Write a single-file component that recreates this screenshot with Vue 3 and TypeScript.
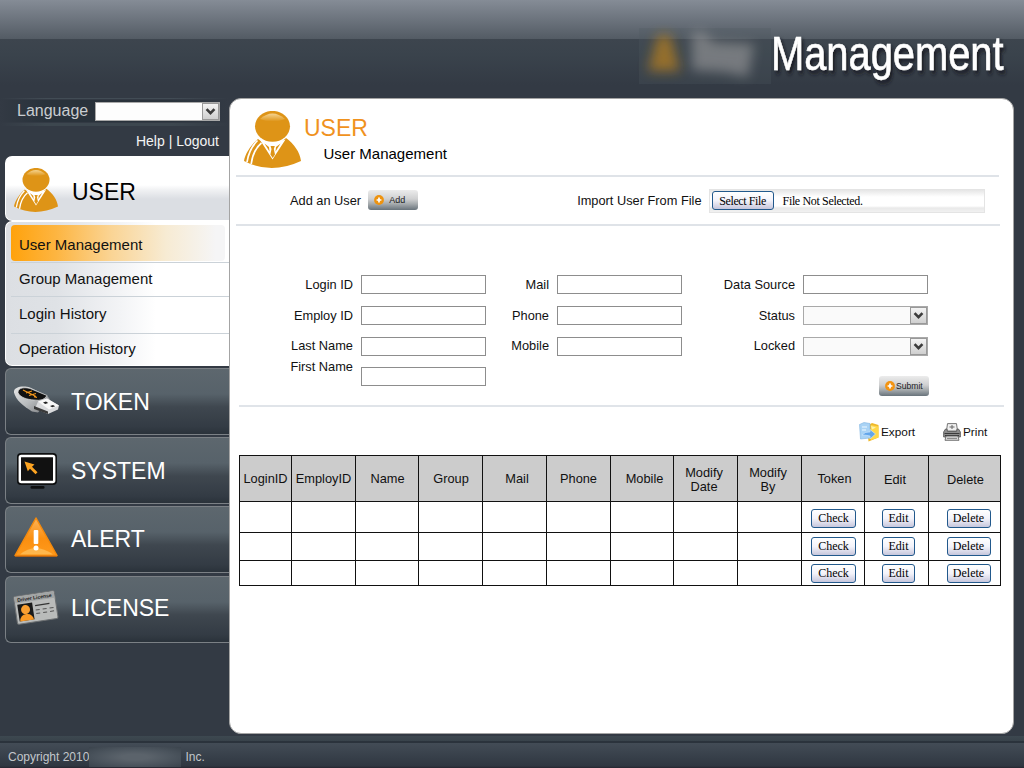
<script setup lang="ts">
interface Field {
  label: string
  kind: 'text' | 'select'
}

const submenu: string[] = ['User Management', 'Group Management', 'Login History', 'Operation History']

const sections = [
  { id: 'token', label: 'TOKEN' },
  { id: 'system', label: 'SYSTEM' },
  { id: 'alert', label: 'ALERT' },
  { id: 'license', label: 'LICENSE' },
]

const fields: Field[] = [
  { label: 'Login ID', kind: 'text' },
  { label: 'Mail', kind: 'text' },
  { label: 'Data Source', kind: 'text' },
  { label: 'Employ ID', kind: 'text' },
  { label: 'Phone', kind: 'text' },
  { label: 'Status', kind: 'select' },
  { label: 'Last Name', kind: 'text' },
  { label: 'Mobile', kind: 'text' },
  { label: 'Locked', kind: 'select' },
]

const columns: string[] = [
  'LoginID', 'EmployID', 'Name', 'Group', 'Mail', 'Phone', 'Mobile',
  'Modify Date', 'Modify By', 'Token', 'Edit', 'Delete',
]
const rows: number[] = [1, 2, 3]
</script>

<template>
  <div class="page">
    <svg class="defs" width="0" height="0">
      <defs>
        <linearGradient id="gloss" x1="0" y1="0" x2="0" y2="1">
          <stop offset="0" stop-color="#f9dfa6" />
          <stop offset="1" stop-color="#de9417" />
        </linearGradient>
        <linearGradient id="alertFill" x1="0" y1="0" x2="0" y2="1">
          <stop offset="0" stop-color="#fdb45a" />
          <stop offset="0.55" stop-color="#fb8f10" />
          <stop offset="1" stop-color="#ff9a1c" />
        </linearGradient>
        <linearGradient id="usbBody" x1="0" y1="0" x2="1" y2="1">
          <stop offset="0" stop-color="#e8e8e8" />
          <stop offset="0.5" stop-color="#b9bcbe" />
          <stop offset="1" stop-color="#77797c" />
        </linearGradient>
        <symbol id="person" viewBox="0 0 57 57">
          <path d="M14 28 C7 34 1 43 0 50 Q27 64 57 50 C56 41 50 33 42 27 Q36 33 28 33 Q20 33 14 28Z" fill="#de9417" />
          <path d="M16 29 L28.500 48.500 L41.500 28.500 Q29 34 16 29Z" fill="#fff" />
          <path d="M26.600 35 L30.800 35 L29.800 38 L31 43.500 L28.700 47 L26.400 43.500 L27.500 38Z" fill="#de9417" />
          <path d="M20.500 32.500 L25 36 L25.500 40.500Z M36.500 32.500 L32 36 L31.500 40.500Z" fill="#de9417" />
          <path d="M13.500 29.500 Q5 38 3 51.200 M17.500 32 Q9 39 7.200 53" stroke="#fff" stroke-width="1.700" fill="none" />
          <ellipse cx="28.500" cy="15.500" rx="18.200" ry="16.500" fill="#fff" />
          <ellipse cx="28.500" cy="15.300" rx="17.500" ry="15.400" fill="#de9417" />
          <path d="M16 8 Q28.500 -3 41 8 Q28.500 13 16 8Z" fill="url(#gloss)" opacity="0.85" />
        </symbol>
      </defs>
    </svg>

    <header class="top">
      <svg width="400" height="98" viewBox="0 0 400 98">
        <defs>
          <filter id="soft" x="-60%" y="-60%" width="220%" height="220%"><feGaussianBlur stdDeviation="6" /></filter>
          <filter id="drop" x="-10%" y="-20%" width="120%" height="150%">
            <feDropShadow dx="2.500" dy="3.500" stdDeviation="2" flood-color="#14191f" flood-opacity="0.9" />
          </filter>
        </defs>
        <rect x="15" y="28" width="132" height="56" fill="#4f5860" opacity="0.28" />
        <path d="M24 71 L34 35 H46 L56 71Z" fill="#b9801f" opacity="0.7" filter="url(#soft)" />
        <path d="M68 32 L80 32 L90 42 L130 44 L124 77 L100 72 L68 70Z" fill="#9b9b9d" opacity="0.6" filter="url(#soft)" />
        <g transform="translate(147 70) scale(0.822 1)">
          <text class="brand" x="0" y="0" filter="url(#drop)">Management</text>
        </g>
      </svg>
    </header>

    <main class="middle">
      <aside class="side">
        <div class="language">
          <span>Language</span>
          <div class="select language-select">
            <i class="arrow"><svg viewBox="0 0 16 16"><path d="M3.800 5.500 L8 9.700 L12.200 5.500" /></svg></i>
          </div>
        </div>
        <nav class="links"><a>Help</a> | <a>Logout</a></nav>

        <div class="section-open">
          <svg class="user-icon"><use href="#person" /></svg>
          <span>USER</span>
        </div>
        <ul class="submenu">
          <li v-for="(item, i) in submenu" :key="item" :class="{ active: i === 0 }">{{ item }}</li>
        </ul>

        <div v-for="s in sections" :key="s.id" class="section" :class="s.id">
          <svg v-if="s.id === 'token'" class="ico" viewBox="0 -2.500 48 40">
            <path d="M1 8 C0 2 11 1 17 3 L34 11 L37 15 L25 28 L19 27 C10 21 3 16 1 8Z" fill="url(#usbBody)" />
            <path d="M5 8 C5 3 12 2.500 17 4 L34 11 Q31 17 21 15.500 C14 15 7 13 5 8Z" fill="#111" stroke="#ddd" stroke-width="0.700" />
            <path d="M10 5.500 L23 12 M13 8.500 L19 6.500 M16 11 L23 9 M21 12 L24 12.800" stroke="#f0951c" stroke-width="1.300" fill="none" />
            <path d="M25 17 L34 14 L46 21 L45 25 L35 29.500 L22 24Z" fill="#d9dadc" />
            <path d="M25 17 L34 14 L46 21 L36 25Z" fill="#f7f7f7" />
            <path d="M30 18 l3 -0.900 l2.200 1.400 l-3 0.900z M37 21.500 l3 -0.900 l2.200 1.200 l-3 0.900z" fill="#222" />
            <path d="M21 21.500 L35 27 V29.500 L21 24.500Z" fill="#3a3a3a" />
          </svg>
          <svg v-else-if="s.id === 'system'" class="ico" viewBox="0 -1 48 40">
            <rect x="4" y="1" width="40" height="32" rx="4" fill="#0e0f10" />
            <rect x="6.800" y="4" width="34.400" height="26" rx="1.500" fill="#111" stroke="#fff" stroke-width="2.400" />
            <path d="M11.500 9.500 L21.500 12.500 L19 14.800 L24.500 20.300 L22.500 22.300 L17 16.800 L14.800 19.300Z" fill="#fca321" />
            <rect x="17.500" y="34" width="14" height="2.800" rx="1.300" fill="#0e0f10" />
          </svg>
          <svg v-else-if="s.id === 'alert'" class="ico" viewBox="0 3.500 48 40">
            <path d="M23 1.500 L44 39 H2Z" fill="url(#alertFill)" stroke="#f58a0c" stroke-width="1.500" stroke-linejoin="round" />
            <path d="M7 38 Q22 25 40 38Z" fill="#ffc462" opacity="0.7" />
            <path d="M2 39.800 H44" stroke="#c7680f" stroke-width="1" />
            <rect x="20.700" y="13.500" width="4.600" height="14" rx="1" fill="#fff" />
            <circle cx="23" cy="31.500" r="2.500" fill="#fff" />
          </svg>
          <svg v-else class="ico" viewBox="0 -0.500 48 40">
            <g transform="rotate(-8.500 23 20)">
              <rect x="2.500" y="5" width="41" height="28" rx="1.500" fill="#b9bbba" stroke="#6d7072" />
              <path d="M3 5.500 H43 V12 H3Z" fill="#a2a5a5" />
              <text x="23" y="10.800" class="card-title" text-anchor="middle">Driver License</text>
              <rect x="5" y="13.500" width="15" height="17" fill="#1a1a1a" />
              <circle cx="12.500" cy="19.500" r="4.500" fill="#fa9f31" />
              <path d="M5.500 30.500 Q6.500 24 12.500 24 Q18.500 24 19.500 30.500Z" fill="#fa9a26" />
              <path d="M22.500 17 H37" stroke="#333" stroke-width="1.200" />
              <path d="M22.500 21.500 H41 M22.500 25 H41" stroke="#555" stroke-dasharray="4 3" />
            </g>
          </svg>
          <span>{{ s.label }}</span>
        </div>
      </aside>

      <section class="panel">
        <div class="title">
          <svg class="title-icon"><use href="#person" /></svg>
          <div>
            <h1>USER</h1>
            <p>User Management</p>
          </div>
        </div>

        <div class="toolbar">
          <span class="add-label">Add an User</span>
          <button class="pill add">
            <svg viewBox="0 0 10 10"><circle cx="5" cy="5" r="4.900" fill="#ee930f" /><path d="M5 2.600 V7.400 M2.600 5 H7.400" stroke="#fff" stroke-width="1.700" /></svg>Add
          </button>
          <span class="import-label">Import User From File</span>
          <div class="file">
            <button class="classic select-file">Select File</button>
            <span>File Not Selected.</span>
          </div>
        </div>

        <form class="filters">
          <template v-for="f in fields" :key="f.label">
            <label>{{ f.label }}</label>
            <input v-if="f.kind === 'text'" type="text" />
            <div v-else class="select">
              <i class="arrow"><svg viewBox="0 0 16 16"><path d="M3.800 5.500 L8 9.700 L12.200 5.500" /></svg></i>
            </div>
          </template>
          <label class="first-name">First Name</label>
          <input type="text" />
          <button type="button" class="pill submit">
            <svg viewBox="0 0 10 10"><circle cx="5" cy="5" r="4.900" fill="#f39412" /><path d="M5 2.600 V7.400 M2.600 5 H7.400" stroke="#fff" stroke-width="1.700" /></svg>Submit
          </button>
        </form>

        <div class="actions">
          <svg class="export-icon" viewBox="0 0 20 20">
            <path d="M8 4 L13 1 L19.500 3 V15.500 L9.500 19.500Z" fill="#f0b92a" />
            <path d="M12 3 L19.500 4.500 V15.500 L12 18Z" fill="#ffd84a" />
            <path d="M0.500 2.500 L5 0.500 L11 1.500 V16 L1.500 17Z" fill="#a9d3f5" stroke="#7fb4e0" stroke-width="0.600" />
            <path d="M3 5 H8 M3 8 H7" stroke="#eef8ff" />
            <path d="M3 13 Q6 9.500 11 10 V7.500 L16.500 12 L11 17 V14 Q7 13 3 13Z" fill="#63a6ea" stroke="#d5ebff" stroke-width="0.600" />
            <path d="M12 4 L17 5.500 L13 7.500Z" fill="#fff3a8" />
          </svg>
          <span class="export">Export</span>
          <svg class="print-icon" viewBox="0 0 18 18">
            <path d="M3.500 8 L4.500 0.600 H13.500 L14.500 8Z" fill="#f0f0f0" stroke="#777" />
            <path d="M6.500 4 H11.500 M9 2 V6" stroke="#666" />
            <path d="M2.500 6 H4 L4.500 8.500 H13.500 L14 6 H15.500 L17.400 9 V14 H0.600 V9Z" fill="#8c8c8c" stroke="#555" stroke-width="0.800" />
            <path d="M1.500 10.500 H16.500 M2 12.500 H16" stroke="#3a3a3a" />
            <path d="M3 13 H15 L16 17.300 H2Z" fill="#dcdcdc" stroke="#555" stroke-width="0.800" />
            <path d="M4 15.300 H14" stroke="#777" />
          </svg>
          <span>Print</span>
        </div>

        <table>
          <colgroup><col v-for="(c, i) in columns" :key="c" :class="'c' + i" /></colgroup>
          <thead>
            <tr><th v-for="c in columns" :key="c" :class="c.toLowerCase()"><span>{{ c }}</span></th></tr>
          </thead>
          <tbody>
            <tr v-for="r in rows" :key="r">
              <td v-for="n in 9" :key="n"></td>
              <td class="check"><button class="classic">Check</button></td>
              <td class="edit-cell"><button class="classic">Edit</button></td>
              <td class="remove"><button class="classic">Delete</button></td>
            </tr>
          </tbody>
        </table>
      </section>
    </main>

    <footer class="bottom">
      <span>Copyright 2010</span>
      <i class="smudge"></i>
      <span>Inc.</span>
    </footer>
  </div>
</template>

<style>
body {
  margin: 0;
  background: #333a44;
}
</style>

<style scoped>
* {
  box-sizing: border-box;
}
.page {
  width: 1024px;
  height: 768px;
  overflow: hidden;
  display: flex;
  flex-direction: column;
  background: #333a44;
  font-family: "Liberation Sans", Arial, sans-serif;
  font-size: 12.8px;
  color: #111;
}
.defs {
  position: absolute;
}
.top {
  height: 98px;
  flex: none;
  display: flex;
  justify-content: flex-end;
  background: linear-gradient(#858c96 0, #535b64 39px, #3d454e 39px, #3a434c 55px, #333a44 85px);
}
.brand {
  font-size: 48.5px;
  fill: #fff;
  stroke: #fff;
  stroke-width: 0.5px;
}
.middle {
  height: 638px;
  flex: none;
  display: flex;
}
.side {
  width: 229px;
  flex: none;
  padding-left: 5px;
  display: flex;
  flex-direction: column;
}
.language {
  height: 29px;
  margin-left: -5px;
  padding: 0 9px 2px 17px;
  display: flex;
  align-items: center;
  justify-content: space-between;
  flex: none;
  font-size: 16px;
  color: #c9cdd1;
  background:
    linear-gradient(90deg, transparent, #424c55 20%, #424c55 75%, transparent) 0 0 / 100% 1px no-repeat,
    linear-gradient(90deg, transparent, #3d474f 20%, #3d474f 75%, transparent) 0 25px / 100% 3px no-repeat,
    linear-gradient(90deg, transparent, #29323b 20%, #29323b 75%, transparent) 0 2px / 100% 22px no-repeat;
}
.language span {
  margin-top: -1px;
}
.select {
  width: 125px;
  height: 19px;
  border: 1px solid #a9a9a9;
  background: #fafafa;
  display: flex;
  justify-content: flex-end;
  align-items: center;
}
.language-select {
  background: #fdfdfd;
}
.arrow {
  width: 17px;
  height: 17px;
  border: 1px solid #999;
  background: linear-gradient(#f4f4f4, #cfcfcf);
  display: flex;
}
.arrow svg {
  width: 15px;
  height: 15px;
}
.arrow path {
  fill: none;
  stroke: #3c3c3c;
  stroke-width: 2.8;
}
.links {
  height: 29px;
  flex: none;
  padding: 6px 10px 0 0;
  text-align: right;
  font-size: 14px;
  line-height: 16px;
  color: #f4f4f4;
}
.section-open {
  height: 65px;
  flex: none;
  display: flex;
  align-items: center;
  padding: 3px 0 0 8px;
  border: solid #fff;
  border-width: 1px 0 1px 1px;
  border-radius: 7px 0 0 7px;
  background: linear-gradient(#fff 28px, #f0f1f3 33px, #dbdee3 42px, #dbdee3);
  font-size: 23px;
  color: #000;
}
.user-icon {
  width: 44px;
  height: 44px;
}
.section-open span {
  margin: 4px 0 0 14px;
}
.submenu {
  list-style: none;
  margin: 0;
  padding: 3px 0 0 5px;
  height: 145px;
  flex: none;
  border: solid #fff;
  border-width: 1px 0 1px 1px;
  border-radius: 7px 0 0 7px;
  background: linear-gradient(90deg, #dcdfe3 0, #dfe2e6 50px, #f3f4f6 115px, #fff 150px);
  font-size: 15px;
  color: #111;
}
.submenu li {
  height: 34px;
  line-height: 32px;
  padding-left: 8px;
  border-top: 1px solid #cbd2d8;
}
.submenu li:nth-child(3) {
  height: 37px;
  line-height: 34px;
}
.submenu li:nth-child(4) {
  line-height: 29px;
}
.submenu li.active {
  height: 36px;
  line-height: 39px;
  margin: 0 4px 1px 0;
  border: 0;
  border-radius: 4px;
  background: linear-gradient(90deg, #ffa20c 0, #fdb541 45px, #fad494 100px, #f7ebd3 155px, #f5f5f6 205px);
}
.section {
  height: 67px;
  flex: none;
  margin-top: 2px;
  display: flex;
  align-items: center;
  padding-left: 7px;
  border: 1px solid #7b8085;
  border-right: 0;
  border-radius: 6px 0 0 6px;
  background: linear-gradient(#5d676e 0, #57626a 25px, #3f474f 38px, #333b44 58px, #2a323a);
  font-size: 23px;
  color: #fff;
}
.section.license {
  margin-top: 3px;
  padding-bottom: 3px;
}
.section span {
  margin: 1px 0 0 10px;
}
.section.alert span {
  margin-top: -1px;
}
.ico {
  width: 48px;
  height: 40px;
  overflow: visible;
}
.card-title {
  font-size: 5px;
  font-weight: bold;
  fill: #222;
}
.panel {
  width: 785px;
  height: 636px;
  padding-left: 6px;
  background: #fff;
  border: 1px solid #a4a4a4;
  border-radius: 12px;
}
.title {
  display: flex;
  height: 78px;
  width: 763px;
  padding: 11px 0 0 8px;
  border-bottom: 2px solid #dfe3e8;
}
.title-icon {
  width: 57px;
  height: 57px;
  margin-top: 1px;
}
h1 {
  margin: 5px 0 0 3px;
  font-size: 23px;
  line-height: 26px;
  font-weight: normal;
  color: #f0921e;
}
.title p {
  margin: 4px 0 0 22.5px;
  font-size: 15px;
  line-height: 18px;
  color: #000;
}
.toolbar {
  display: flex;
  align-items: center;
  width: 764px;
  height: 49px;
  padding-left: 54px;
  border-bottom: 2px solid #dfe3e8;
}
.pill {
  width: 50px;
  height: 20px;
  padding: 0;
  border: 0;
  border-radius: 3px;
  display: flex;
  align-items: center;
  font: 9px "Liberation Sans", Arial, sans-serif;
  color: #222;
  background: linear-gradient(#ececec, #cfd0d1 45%, #a5aaad 70%, #68737b);
}
.pill svg {
  width: 10px;
  height: 10px;
}
.add {
  margin: 0 0 1px 7px;
  padding-left: 6px;
  gap: 5px;
}
.submit {
  padding-left: 6px;
  gap: 1px;
  font-size: 8.6px;
  margin: 15px -1px 0 0;
  align-self: start;
  justify-self: end;
  grid-column: 6;
}
.import-label {
  margin-left: 159px;
}
.file {
  width: 276px;
  height: 24px;
  margin-left: 7px;
  padding-left: 2px;
  display: flex;
  align-items: center;
  border: 1px solid #e4e4e4;
  background: linear-gradient(#e6e6e6, #fff 7px, #fff 16px, #e9e9e9 18px, #f1f1f1);
  font: 12px "Liberation Serif", "Times New Roman", serif;
  color: #000;
}
.file span {
  margin: 2px 0 0 9px;
  letter-spacing: -0.35px;
}
.classic {
  height: 19px;
  margin: 0 auto;
  padding: 0;
  border: 1px solid #22598c;
  border-radius: 3px;
  background: linear-gradient(#fff, #f3f3fa 50%, #c6c6dc);
  font: 12px/16px "Liberation Serif", "Times New Roman", serif;
  color: #000;
  display: block;
}
.file .select-file {
  width: 62px;
  margin: 0;
  letter-spacing: -0.4px;
}
.filters {
  display: grid;
  grid-template-columns: 122px 125px 71px 125px 121px 125px;
  grid-template-rows: 31px 31px 30px 31px;
  align-items: center;
  height: 181px;
  width: 765px;
  margin-left: 3px;
  padding-top: 43px;
  border-bottom: 2px solid #e0e4e9;
}
.filters label {
  text-align: right;
  padding: 0 8px 1px 0;
}
.filters .first-name {
  padding-bottom: 21px;
}
.filters input {
  width: 125px;
  height: 19px;
  border: 1px solid #8d8d8d;
  background: #fff;
  padding: 0;
}
.actions {
  display: flex;
  align-items: center;
  height: 48px;
  padding: 2px 0 0 623px;
  font-size: 11.8px;
}
.export-icon {
  width: 20px;
  height: 20px;
  margin-right: 2px;
}
.export {
  width: 62px;
}
.print-icon {
  width: 18px;
  height: 18px;
  margin-right: 2px;
}
table {
  width: 762px;
  margin-left: 3px;
  border-collapse: collapse;
  table-layout: fixed;
}
.c0 { width: 52px; }
.c1, .c3, .c4, .c5, .c7, .c8, .c10 { width: 64px; }
.c2, .c6, .c9 { width: 63px; }
th, td {
  border: 1px solid #111;
  padding: 0;
}
th {
  height: 46px;
  background: #ccc;
  font-weight: normal;
  line-height: 14px;
  white-space: nowrap;
}
th[class^="modify"] {
  white-space: normal;
}
th span {
  display: block;
  padding-top: 1px;
}
th.mail span, th.mobile span {
  padding-left: 5px;
}
th.token span {
  padding-left: 3px;
}
th.name span, th.group span {
  padding-left: 1px;
}
th[class^="modify"] span {
  padding: 3px 8px 0 5px;
}
th.edit span {
  padding: 3px 3px 0 0;
}
th.delete span {
  padding: 3px 0 0 2px;
}
tbody tr {
  height: 28px;
}
tbody tr:first-child {
  height: 31px;
}
tbody tr:last-child {
  height: 25px;
}
tbody tr:first-child .classic {
  margin-top: 2px;
}
tbody tr:nth-child(2) .classic {
  margin-bottom: 1px;
}
.check .classic {
  width: 45px;
}
.check {
  padding-left: 1px;
}
.edit-cell .classic {
  width: 33px;
}
.edit-cell {
  padding-left: 4px;
}
.remove .classic {
  width: 44px;
}
.remove {
  padding-left: 8px;
}
.bottom {
  flex: 1;
  display: flex;
  align-items: center;
  padding: 10px 0 0 8px;
  font-size: 12px;
  color: #c3c7cb;
  background: linear-gradient(#3d4850 0, #39434b 5px, #2b333c 5px, #2b333c 7px, #434c56 7px, #2f3741 30px, #25252f);
}
.smudge {
  width: 92px;
  height: 20px;
  margin-right: 4px;
  background: radial-gradient(ellipse, #5b636b 20%, #4b545d 60%, #3b444d);
}
</style>
